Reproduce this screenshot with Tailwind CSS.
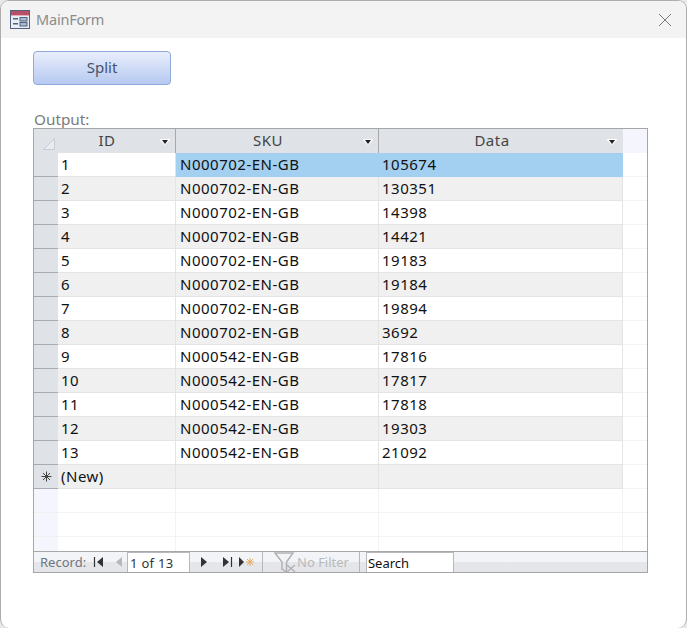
<!DOCTYPE html>
<html>
<head>
<meta charset="utf-8">
<script src="https://cdn.jsdelivr.net/npm/@tailwindcss/browser@4"></script>
</head>
<body class="bg-[#e8e8e8] font-['Noto_Sans',sans-serif]">
<div class="w-[687px] h-[628px] bg-white rounded-[9px] border-x border-t border-[#adadad] overflow-hidden flex flex-col">
  <div class="h-[37px] shrink-0 bg-[#f3f3f3] flex items-center pl-[9px] pr-[14px]">
    <svg width="21" height="20" viewBox="0 0 21 20" class="mt-[1px]">
      <rect x="0.5" y="0.5" width="19" height="18" fill="#e8eef6" stroke="#55607a"/>
      <rect x="1" y="1" width="18" height="4" fill="#b8506a"/>
      <rect x="1" y="5" width="18" height="1" fill="#e9a9b8"/>
      <rect x="3" y="8" width="5" height="1.5" fill="#55607a"/>
      <rect x="3" y="13" width="5" height="1.5" fill="#55607a"/>
      <rect x="10" y="7.5" width="7" height="3.5" fill="#a9bcd6" stroke="#55607a" stroke-width="1"/>
      <rect x="10" y="12.5" width="7" height="3.5" fill="#a9bcd6" stroke="#55607a" stroke-width="1"/>
    </svg>
    <span class="ml-[5px] text-[14.5px] tracking-[-0.2px] text-[#8c8c8c]">MainForm</span>
    <svg width="14" height="14" viewBox="0 0 14 14" class="ml-auto">
      <path d="M1 1L13 13M13 1L1 13" stroke="#7a7a7a" stroke-width="1" fill="none"/>
    </svg>
  </div>
  <div class="flex-1 pl-[32px] pt-[13px] flex flex-col items-start">
    <button class="w-[138px] h-[34px] rounded-[4px] border border-[#8fa9dc] bg-gradient-to-b from-[#e9eefb] to-[#b6c9f1] text-[15px] text-[#44546a] flex items-center justify-center pb-[1px]">Split</button>
    <div class="mt-[25px] ml-[1px] h-[18px] leading-[18px] text-[15.3px] text-[#7b7b7b]">Output:</div>
    <div class="w-[615px] h-[445px] border border-[#a6a6a6] flex flex-col text-[15px] tracking-[0.5px] text-[#111111] leading-[23px]">
      <div class="h-[24px] shrink-0 grid grid-cols-[24px_118px_203px_244px_1fr] bg-[#dfe2e6] text-[#444444]">
        <div class="relative border-r border-[#dfe2e6]"><svg width="12" height="12" viewBox="0 0 12 12" class="absolute left-[9px] top-[9px]"><path d="M0.5 11.5L11.5 0.5V11.5Z" fill="#e9ebef" stroke="#c8ccd2"/></svg></div>
        <div class="relative border-r border-[#a8a8a8] text-center pr-[19px]">ID<svg width="10" height="6" viewBox="0 0 10 6" class="absolute right-[5px] top-[10px]"><path d="M0 0H10V1L5 6L0 1Z" fill="#fff"/><path d="M2 1H8L5 5Z" fill="#222"/></svg></div>
        <div class="relative border-r border-[#a8a8a8] text-center pr-[18px]">SKU<svg width="10" height="6" viewBox="0 0 10 6" class="absolute right-[5px] top-[10px]"><path d="M0 0H10V1L5 6L0 1Z" fill="#fff"/><path d="M2 1H8L5 5Z" fill="#222"/></svg></div>
        <div class="relative text-center pr-[18px]">Data<svg width="10" height="6" viewBox="0 0 10 6" class="absolute right-[6px] top-[10px]"><path d="M0 0H10V1L5 6L0 1Z" fill="#fff"/><path d="M2 1H8L5 5Z" fill="#222"/></svg></div>
        <div class="bg-[#f5f6fd]"></div>
      </div>
      <div class="h-[24px] grid grid-cols-[24px_118px_203px_244px_1fr] bg-white">
        <div class="bg-[#dfe2e6] border-b border-[#a8acb2]"></div>
        <div class="pl-[3px] border-r border-b border-[#e4e4e4]">1</div>
        <div class="pl-[4px] bg-[#a3cff1] border-r border-[#a3cff1]">N000702-EN-GB</div>
        <div class="pl-[3px] bg-[#a3cff1]">105674</div>
        <div class="border-b border-[#f3f3f3]"></div>
      </div>
      <div class="h-[24px] grid grid-cols-[24px_118px_203px_244px_1fr] bg-white"><div class="bg-[#dfe2e6] border-b border-[#a8acb2]"></div><div class="pl-[3px] bg-[#f0f0f0] border-r border-b border-[#e4e4e4]">2</div><div class="pl-[4px] bg-[#f0f0f0] border-r border-b border-[#e4e4e4]">N000702-EN-GB</div><div class="pl-[3px] bg-[#f0f0f0] border-r border-b border-[#e4e4e4]">130351</div><div class="border-b border-[#f3f3f3]"></div></div>
      <div class="h-[24px] grid grid-cols-[24px_118px_203px_244px_1fr] bg-white"><div class="bg-[#dfe2e6] border-b border-[#a8acb2]"></div><div class="pl-[3px] border-r border-b border-[#e4e4e4]">3</div><div class="pl-[4px] border-r border-b border-[#e4e4e4]">N000702-EN-GB</div><div class="pl-[3px] border-r border-b border-[#e4e4e4]">14398</div><div class="border-b border-[#f3f3f3]"></div></div>
      <div class="h-[24px] grid grid-cols-[24px_118px_203px_244px_1fr] bg-white"><div class="bg-[#dfe2e6] border-b border-[#a8acb2]"></div><div class="pl-[3px] bg-[#f0f0f0] border-r border-b border-[#e4e4e4]">4</div><div class="pl-[4px] bg-[#f0f0f0] border-r border-b border-[#e4e4e4]">N000702-EN-GB</div><div class="pl-[3px] bg-[#f0f0f0] border-r border-b border-[#e4e4e4]">14421</div><div class="border-b border-[#f3f3f3]"></div></div>
      <div class="h-[24px] grid grid-cols-[24px_118px_203px_244px_1fr] bg-white"><div class="bg-[#dfe2e6] border-b border-[#a8acb2]"></div><div class="pl-[3px] border-r border-b border-[#e4e4e4]">5</div><div class="pl-[4px] border-r border-b border-[#e4e4e4]">N000702-EN-GB</div><div class="pl-[3px] border-r border-b border-[#e4e4e4]">19183</div><div class="border-b border-[#f3f3f3]"></div></div>
      <div class="h-[24px] grid grid-cols-[24px_118px_203px_244px_1fr] bg-white"><div class="bg-[#dfe2e6] border-b border-[#a8acb2]"></div><div class="pl-[3px] bg-[#f0f0f0] border-r border-b border-[#e4e4e4]">6</div><div class="pl-[4px] bg-[#f0f0f0] border-r border-b border-[#e4e4e4]">N000702-EN-GB</div><div class="pl-[3px] bg-[#f0f0f0] border-r border-b border-[#e4e4e4]">19184</div><div class="border-b border-[#f3f3f3]"></div></div>
      <div class="h-[24px] grid grid-cols-[24px_118px_203px_244px_1fr] bg-white"><div class="bg-[#dfe2e6] border-b border-[#a8acb2]"></div><div class="pl-[3px] border-r border-b border-[#e4e4e4]">7</div><div class="pl-[4px] border-r border-b border-[#e4e4e4]">N000702-EN-GB</div><div class="pl-[3px] border-r border-b border-[#e4e4e4]">19894</div><div class="border-b border-[#f3f3f3]"></div></div>
      <div class="h-[24px] grid grid-cols-[24px_118px_203px_244px_1fr] bg-white"><div class="bg-[#dfe2e6] border-b border-[#a8acb2]"></div><div class="pl-[3px] bg-[#f0f0f0] border-r border-b border-[#e4e4e4]">8</div><div class="pl-[4px] bg-[#f0f0f0] border-r border-b border-[#e4e4e4]">N000702-EN-GB</div><div class="pl-[3px] bg-[#f0f0f0] border-r border-b border-[#e4e4e4]">3692</div><div class="border-b border-[#f3f3f3]"></div></div>
      <div class="h-[24px] grid grid-cols-[24px_118px_203px_244px_1fr] bg-white"><div class="bg-[#dfe2e6] border-b border-[#a8acb2]"></div><div class="pl-[3px] border-r border-b border-[#e4e4e4]">9</div><div class="pl-[4px] border-r border-b border-[#e4e4e4]">N000542-EN-GB</div><div class="pl-[3px] border-r border-b border-[#e4e4e4]">17816</div><div class="border-b border-[#f3f3f3]"></div></div>
      <div class="h-[24px] grid grid-cols-[24px_118px_203px_244px_1fr] bg-white"><div class="bg-[#dfe2e6] border-b border-[#a8acb2]"></div><div class="pl-[3px] bg-[#f0f0f0] border-r border-b border-[#e4e4e4]">10</div><div class="pl-[4px] bg-[#f0f0f0] border-r border-b border-[#e4e4e4]">N000542-EN-GB</div><div class="pl-[3px] bg-[#f0f0f0] border-r border-b border-[#e4e4e4]">17817</div><div class="border-b border-[#f3f3f3]"></div></div>
      <div class="h-[24px] grid grid-cols-[24px_118px_203px_244px_1fr] bg-white"><div class="bg-[#dfe2e6] border-b border-[#a8acb2]"></div><div class="pl-[3px] border-r border-b border-[#e4e4e4]">11</div><div class="pl-[4px] border-r border-b border-[#e4e4e4]">N000542-EN-GB</div><div class="pl-[3px] border-r border-b border-[#e4e4e4]">17818</div><div class="border-b border-[#f3f3f3]"></div></div>
      <div class="h-[24px] grid grid-cols-[24px_118px_203px_244px_1fr] bg-white"><div class="bg-[#dfe2e6] border-b border-[#a8acb2]"></div><div class="pl-[3px] bg-[#f0f0f0] border-r border-b border-[#e4e4e4]">12</div><div class="pl-[4px] bg-[#f0f0f0] border-r border-b border-[#e4e4e4]">N000542-EN-GB</div><div class="pl-[3px] bg-[#f0f0f0] border-r border-b border-[#e4e4e4]">19303</div><div class="border-b border-[#f3f3f3]"></div></div>
      <div class="h-[24px] grid grid-cols-[24px_118px_203px_244px_1fr] bg-white"><div class="bg-[#dfe2e6] border-b border-[#a8acb2]"></div><div class="pl-[3px] border-r border-b border-[#e4e4e4]">13</div><div class="pl-[4px] border-r border-b border-[#e4e4e4]">N000542-EN-GB</div><div class="pl-[3px] border-r border-b border-[#e4e4e4]">21092</div><div class="border-b border-[#f3f3f3]"></div></div>
      <div class="h-[24px] grid grid-cols-[24px_118px_203px_244px_1fr] bg-white">
        <div class="bg-[#dfe2e6] border-b border-[#a8acb2] flex items-center justify-center"><svg width="11" height="11" viewBox="0 0 11 11"><path d="M5.5 0.5V10.5M0.5 5.5H10.5M2 2L9 9M9 2L2 9" stroke="#444" stroke-width="1" fill="none"/></svg></div>
        <div class="pl-[3px] bg-[#f0f0f0] border-r border-b border-[#e4e4e4]">(New)</div>
        <div class="bg-[#f0f0f0] border-r border-b border-[#e4e4e4]"></div>
        <div class="bg-[#f0f0f0] border-r border-b border-[#e4e4e4]"></div>
        <div class="border-b border-[#f3f3f3]"></div>
      </div>
      <div class="h-[24px] grid grid-cols-[24px_118px_203px_244px_1fr]"><div class="bg-[#f5f6fd] border-b border-[#f0f0f0]"></div><div class="border-r border-b border-[#f3f3f3]"></div><div class="border-r border-b border-[#f3f3f3]"></div><div class="border-r border-b border-[#f3f3f3]"></div><div class="border-b border-[#f3f3f3]"></div></div>
      <div class="h-[24px] grid grid-cols-[24px_118px_203px_244px_1fr]"><div class="bg-[#f5f6fd] border-b border-[#f0f0f0]"></div><div class="border-r border-b border-[#f3f3f3]"></div><div class="border-r border-b border-[#f3f3f3]"></div><div class="border-r border-b border-[#f3f3f3]"></div><div class="border-b border-[#f3f3f3]"></div></div>
      <div class="h-[14px] grid grid-cols-[24px_118px_203px_244px_1fr]"><div class="bg-[#f5f6fd]"></div><div class="border-r border-[#f3f3f3]"></div><div class="border-r border-[#f3f3f3]"></div><div class="border-r border-[#f3f3f3]"></div><div></div></div>
      <div class="h-[21px] shrink-0 border-t border-[#a8a8a8] bg-gradient-to-b from-[#f3f4f7] from-50% to-[#e4e6ea] to-50% flex items-center pl-[6px] text-[13px] tracking-normal leading-[20px] text-[#6f7680]">
        <span class="w-[53px]">Record:</span>
        <svg width="12" height="10" viewBox="0 0 12 10" class="mb-[1px]"><path d="M1.5 0V10" stroke="#333" stroke-width="1.2"/><path d="M10 0V10L4 5Z" fill="#333"/></svg>
        <svg width="8" height="10" viewBox="0 0 8 10" class="ml-[10px] mb-[1px]"><path d="M7 0V10L1 5Z" fill="#b5b8bd"/></svg>
        <span class="ml-[4px] w-[63px] h-[20px] bg-white border-x border-t border-[#b5b8bd] pl-[2px] tracking-[0.3px] text-[#333333]">1 of 13</span>
        <svg width="8" height="10" viewBox="0 0 8 10" class="ml-[10px] mb-[1px]"><path d="M1 0V10L7 5Z" fill="#333"/></svg>
        <svg width="12" height="10" viewBox="0 0 12 10" class="ml-[14px] mb-[1px]"><path d="M1 0V10L7 5Z" fill="#333"/><path d="M9.5 0V10" stroke="#333" stroke-width="1.2"/></svg>
        <svg width="17" height="10" viewBox="0 0 17 10" class="ml-[4px] mb-[1px]"><path d="M1 0V10L6 5Z" fill="#333"/><path d="M12 1V9M8 5H16M9 2L15 8M15 2L9 8" stroke="#e8a95a" stroke-width="1"/></svg>
        <div class="ml-[7px] w-px self-stretch bg-[#b5b8bd]"></div>
        <svg width="24" height="21" viewBox="0 0 24 21" class="ml-[11px]"><path d="M1 1H19L12.5 10V20L8 17V10Z" fill="none" stroke="#b2b2b2" stroke-width="1.5"/><path d="M13 13L21 20M21 13L13 20" stroke="#b2b2b2" stroke-width="1.5"/></svg>
        <span class="-ml-[1px] text-[13px] text-[#b9b9b9]">No Filter</span>
        <div class="ml-[10px] w-px self-stretch bg-[#b5b8bd]"></div>
        <span class="ml-[6px] w-[88px] h-[20px] bg-white border-x border-t border-[#b5b8bd] pl-[1px] text-[#111111]">Search</span>
      </div>
    </div>
  </div>
</div>
</body>
</html>
